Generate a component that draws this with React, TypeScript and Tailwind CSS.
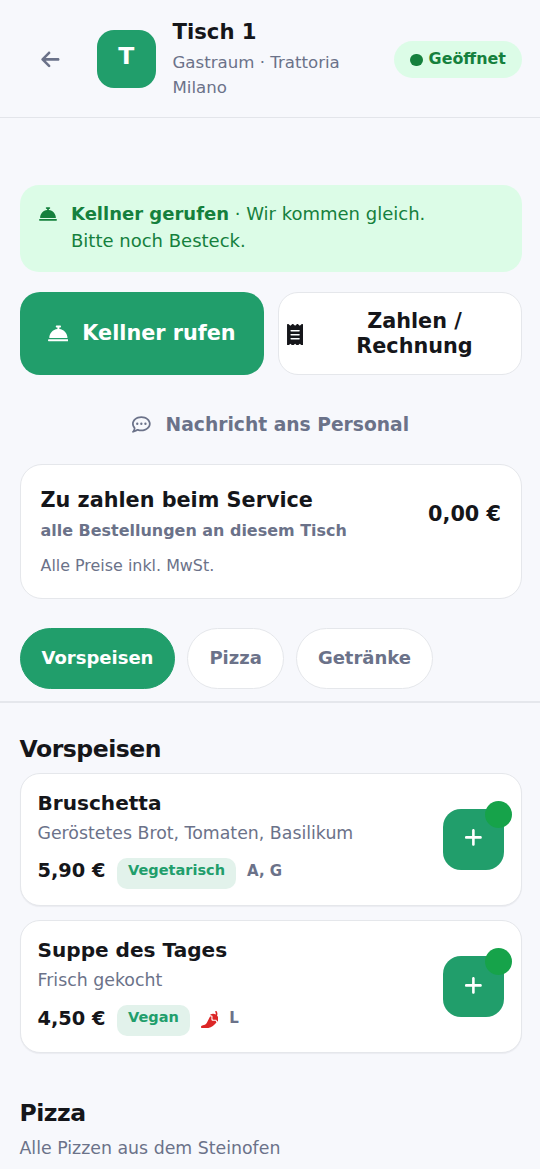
import React, { useState } from "react";
import {
  FaArrowLeft,
  FaBellConcierge,
  FaPepperHot,
  FaPlus,
  FaReceipt,
  FaRegCommentDots,
} from "react-icons/fa6";

interface Dish {
  id: string;
  name: string;
  description: string;
  price: string;
  tag: string;
  spicy?: boolean;
  allergens: string;
}

const categories = ["Vorspeisen", "Pizza", "Getränke"];

const starters: Dish[] = [
  {
    id: "bruschetta",
    name: "Bruschetta",
    description: "Geröstetes Brot, Tomaten, Basilikum",
    price: "5,90 €",
    tag: "Vegetarisch",
    allergens: "A, G",
  },
  {
    id: "suppe",
    name: "Suppe des Tages",
    description: "Frisch gekocht",
    price: "4,50 €",
    tag: "Vegan",
    spicy: true,
    allergens: "L",
  },
];

const Header: React.FC = () => (
  <header className="flex h-[118px] items-center border-b border-[#e3e5ea] pr-[18px] pl-5">
    <button className="flex size-[60px] shrink-0 items-center justify-center pt-[2px] text-[#6b7289]">
      <FaArrowLeft className="size-[20.77px]" />
    </button>
    <div className="mt-px ml-[17px] flex size-[58.5px] shrink-0 items-center justify-center rounded-[17px] bg-[#219e6b] pb-[5px] text-[23.5px] leading-none font-bold text-white">
      T
    </div>
    <div className="ml-[17px] min-w-0 flex-1">
      <h1 className="text-[21.2px] leading-[30px] font-bold">Tisch 1</h1>
      <p className="mt-[3px] text-[16.62px] leading-[25px] text-[#6b7289]">
        Gastraum · Trattoria Milano
      </p>
    </div>
    <span className="mt-[2px] flex h-[37.5px] w-32 shrink-0 items-center justify-center gap-[6px] rounded-full bg-[#dcfce7] text-[15.9px] font-bold text-[#15803d]">
      <span className="mt-px size-[12.5px] rounded-full bg-[#15803d]" />
      <span className="pb-px">Geöffnet</span>
    </span>
  </header>
);

const DishCard: React.FC<{ dish: Dish }> = ({ dish }) => (
  <article className="flex h-[133px] items-center justify-between rounded-[20px] border-[1.4px] border-[#e5e7eb] bg-white px-[17px] shadow-[0_1px_1px_rgba(20,20,40,0.05)]">
    <div className="pb-[2px]">
      <h3 className="text-[20.08px] leading-[28px] font-bold">{dish.name}</h3>
      <p className="mt-[3.5px] text-[17.35px] leading-[26px] text-[#6b7289]">
        {dish.description}
      </p>
      <div className="mt-[11.5px] flex h-[31px] items-center">
        <span className="pb-[4px] text-[19.38px] leading-none font-bold">
          {dish.price}
        </span>
        <span className="ml-[11.5px] flex h-[31px] items-center rounded-[10px] bg-[#e2f2eb] px-[11px] pb-[4px] text-[14.54px] font-bold text-[#219e6b]">
          {dish.tag}
        </span>
        {dish.spicy && (
          <FaPepperHot className="mb-[2px] ml-[11px] size-[17.5px] text-[#dc2626]" />
        )}
        <span className="ml-[11px] pb-[4px] text-[15px] leading-none font-bold text-[#6b7289]">
          {dish.allergens}
        </span>
      </div>
    </div>
    <button className="relative flex size-[61px] items-center justify-center rounded-[18px] bg-[#219e6b] pr-px pb-[4px] text-white">
      <FaPlus className="size-[20.77px]" />
      <span className="absolute -top-2 -right-2 size-[27px] rounded-full bg-[#16a34a]" />
    </button>
  </article>
);

export default function App() {
  const [active, setActive] = useState("Vorspeisen");

  return (
    <div className="h-[1169px] overflow-hidden bg-[#f7f8fc] font-['DejaVu_Sans',sans-serif] text-[#15161a]">
      <Header />

      <main>
        <section className="pt-[67px] pr-[18px] pl-[19.5px]">
          <div className="flex h-[87px] rounded-[19px] bg-[#dcfce7] pt-[15px] pl-[19px] text-[18px] leading-[27px] text-[#15803d]">
            <FaBellConcierge className="mt-[4.5px] size-[18px] shrink-0" />
            <p className="ml-[14.5px]">
              <strong>Kellner gerufen</strong> · Wir kommen gleich.
              <br />
              Bitte noch Besteck.
            </p>
          </div>

          <div className="mt-5 grid grid-cols-2 gap-[14px] text-[20.77px] leading-[25px] font-bold">
            <button className="flex h-[83px] items-center justify-center gap-[14px] rounded-[20px] bg-[#219e6b] text-white">
              <FaBellConcierge className="size-[20.77px]" />
              <span className="pb-px">Kellner rufen</span>
            </button>
            <button className="flex h-[83px] items-center gap-[13px] rounded-[20px] border border-[#e5e7eb] bg-white px-2">
              <FaReceipt className="mt-[2px] h-[21.5px] w-[16.2px] shrink-0" />
              <span className="flex-1 px-8 text-center">Zahlen / Rechnung</span>
            </button>
          </div>

          <button className="mt-[22px] flex h-[56px] w-full items-center justify-center gap-[14.5px] text-[18.69px] font-bold text-[#6b7289]">
            <FaRegCommentDots className="mb-px size-[18.69px]" />
            Nachricht ans Personal
          </button>

          <div className="mt-[11px] flex h-[135px] justify-between rounded-[22px] border-[1.4px] border-[#e5e7eb] bg-white px-[20px] pt-5">
            <div>
              <h2 className="text-[20.77px] leading-[30px] font-bold">
                Zu zahlen beim Service
              </h2>
              <p className="mt-[3px] text-[15.96px] leading-[26px] font-bold text-[#6b7289]">
                alle Bestellungen an diesem Tisch
              </p>
              <p className="mt-[9px] text-[15.92px] leading-[26px] text-[#6b7289]">
                Alle Preise inkl. MwSt.
              </p>
            </div>
            <span className="mt-[14px] text-[20.77px] leading-[30px] font-bold">
              0,00 €
            </span>
          </div>
        </section>

        <nav className="mt-[29px] flex gap-3 border-b-2 border-[#e5e7ec] px-[19.5px] pb-3">
          {categories.map((category) => (
            <button
              key={category}
              onClick={() => setActive(category)}
              className={`h-[61px] rounded-full border-[1.4px] px-[21px] pb-[2px] text-[18px] font-bold ${
                active === category
                  ? "border-[#219e6b] bg-[#219e6b] text-white"
                  : "border-[#e5e7eb] bg-white text-[#6b7289]"
              }`}
            >
              {category}
            </button>
          ))}
        </nav>

        <section className="pt-[30px] pr-[18px] pl-[19.5px]">
          <h2 className="text-[23.54px] leading-[32px] font-bold tracking-[-0.02em]">
            Vorspeisen
          </h2>
          <div className="mt-[8px] flex flex-col gap-[14.4px]">
            {starters.map((dish) => (
              <DishCard key={dish.id} dish={dish} />
            ))}
          </div>
        </section>

        <section className="px-[19.5px] pt-[44px]">
          <h2 className="text-[23.54px] leading-[32px] font-bold tracking-[-0.02em]">
            Pizza
          </h2>
          <p className="mt-[6px] text-[17.35px] leading-[26px] text-[#6b7289]">
            Alle Pizzen aus dem Steinofen
          </p>
        </section>
      </main>
    </div>
  );
}
